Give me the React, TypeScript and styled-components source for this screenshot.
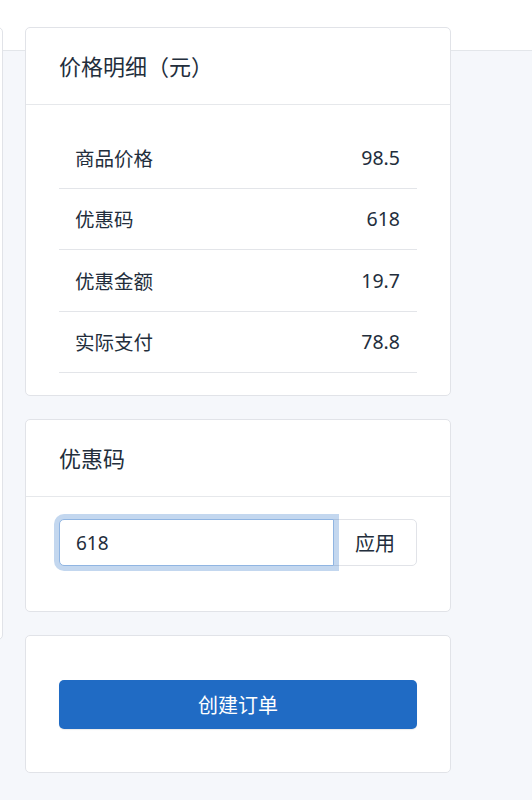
import React from "react";
import styled, { createGlobalStyle } from "styled-components";

const GlobalStyle = createGlobalStyle`
  html, body {
    margin: 0;
    padding: 0;
    background: #f5f7fb;
    overflow: hidden;
  }
  body {
    font-family: "Noto Sans", "Noto Sans CJK SC", sans-serif;
    color: #232e3c;
  }
  * {
    box-sizing: border-box;
  }
`;

const TopBar = styled.div`
  height: 51px;
  background: #ffffff;
  border-bottom: 1px solid #e3e6ea;
`;

const Content = styled.div`
  display: flex;
  align-items: flex-start;
  gap: 22px;
  margin-top: -24px;
  margin-left: -277px;
  position: relative;
`;

const Card = styled.div<{ $width?: number; $height?: number }>`
  background: #ffffff;
  border: 1px solid #e1e3e8;
  border-radius: 5px;
  width: ${(p) => (p.$width ? `${p.$width}px` : "auto")};
  ${(p) => (p.$height ? `height: ${p.$height}px;` : "")}
  flex-shrink: 0;
`;

const Column = styled.div`
  display: flex;
  flex-direction: column;
  gap: 23px;
  width: 426px;
  flex-shrink: 0;
`;

const CardHeader = styled.div`
  height: 77px;
  display: flex;
  align-items: center;
  padding: 0 33px 2px;
  border-bottom: 1px solid #e6e8eb;
`;

const CardTitle = styled.h3`
  margin: 0;
  font-size: 22px;
  font-weight: 400;
  color: #232e3c;
`;

const CardBody = styled.div<{ $pt?: number; $pb?: number }>`
  padding: ${(p) => p.$pt ?? 22}px 33px ${(p) => p.$pb ?? 22}px;
`;

const PriceList = styled.div`
  display: flex;
  flex-direction: column;
`;

const PriceRow = styled.div`
  height: 61.5px;
  display: flex;
  align-items: center;
  justify-content: space-between;
  padding: 0 17px 0 16px;
  border-bottom: 1px solid #e3e5e9;
  font-size: 19.5px;
`;

const InputGroup = styled.div`
  display: flex;
  height: 47px;
`;

const CodeInput = styled.input`
  flex: 1;
  min-width: 0;
  height: 100%;
  border: 1px solid #90b5e2;
  border-radius: 5px 0 0 5px;
  box-shadow: 0 0 0 5px rgba(32, 107, 196, 0.27);
  padding: 0 16px;
  font-family: inherit;
  font-size: 19px;
  color: #232e3c;
  caret-color: #232e3c;
  outline: none;
  position: relative;
  z-index: 2;
  background: #ffffff;
`;

const ApplyButton = styled.button`
  width: 84px;
  margin-left: -1px;
  height: 100%;
  border: 1px solid #e1e3e8;
  border-radius: 0 5px 5px 0;
  background: #ffffff;
  font-family: inherit;
  font-size: 20px;
  color: #232e3c;
  padding: 0;
  cursor: pointer;
`;

const PrimaryButton = styled.button`
  width: 100%;
  height: 49px;
  border: none;
  border-radius: 5px;
  background: #206bc4;
  color: #ffffff;
  font-family: inherit;
  font-size: 20px;
  cursor: pointer;
  box-shadow: 0 1px 1px rgba(0, 0, 0, 0.08);
`;

const prices = [
  { label: "商品价格", value: "98.5" },
  { label: "优惠码", value: "618" },
  { label: "优惠金额", value: "19.7" },
  { label: "实际支付", value: "78.8" },
];

export default function App() {
  return (
    <>
      <GlobalStyle />
      <TopBar />
      <Content>
        <Card $width={280} $height={613} />
        <Column>
          <Card>
            <CardHeader>
              <CardTitle>价格明细（元）</CardTitle>
            </CardHeader>
            <CardBody $pt={22} $pb={22}>
              <PriceList>
                {prices.map((p) => (
                  <PriceRow key={p.label}>
                    <span>{p.label}</span>
                    <span>{p.value}</span>
                  </PriceRow>
                ))}
              </PriceList>
            </CardBody>
          </Card>
          <Card>
            <CardHeader>
              <CardTitle>优惠码</CardTitle>
            </CardHeader>
            <CardBody $pt={22} $pb={45}>
              <InputGroup>
                <CodeInput defaultValue="618" autoFocus />
                <ApplyButton>应用</ApplyButton>
              </InputGroup>
            </CardBody>
          </Card>
          <Card>
            <CardBody $pt={44} $pb={43}>
              <PrimaryButton>创建订单</PrimaryButton>
            </CardBody>
          </Card>
        </Column>
      </Content>
    </>
  );
}
